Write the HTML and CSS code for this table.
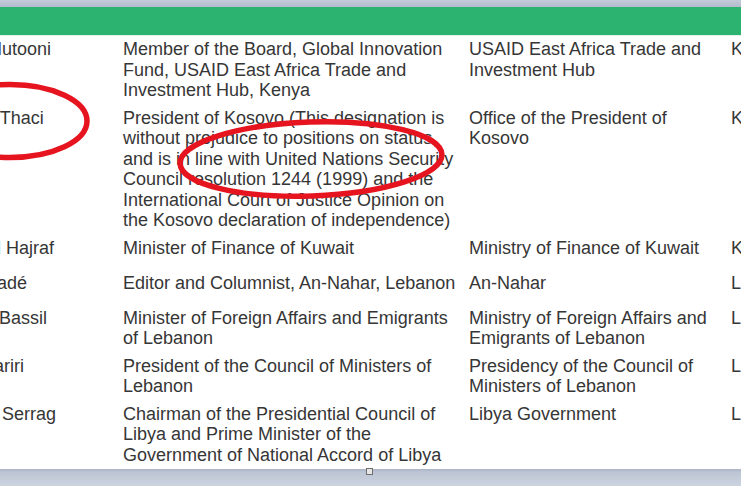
FILE: index.html
```html
<!DOCTYPE html>
<html lang="en">
<head>
<meta charset="utf-8">
<title>Participants</title>
<link rel="stylesheet" href="styles.css">
</head>
<body>
<div class="window">
  <div class="topbar"></div>
  <div class="header"></div>
  <div class="sheet">
    <div class="table">
      <div class="row">
        <div class="cell name">Karen Mutooni</div>
        <div class="cell title">Member of the Board, Global Innovation Fund, USAID East Africa Trade and Investment Hub, Kenya</div>
        <div class="cell org">USAID East Africa Trade and Investment Hub</div>
        <div class="cell country">Kenya</div>
      </div>
      <div class="row">
        <div class="cell name">Hashim Thaci</div>
        <div class="cell title">President of Kosovo (This designation is without prejudice to positions on status, and is in line with United Nations Security Council resolution 1244 (1999) and the International Court of Justice Opinion on the Kosovo declaration of independence)</div>
        <div class="cell org">Office of the President of Kosovo</div>
        <div class="cell country">Kosovo</div>
      </div>
      <div class="row">
        <div class="cell name">Nayef Al Hajraf</div>
        <div class="cell title">Minister of Finance of Kuwait</div>
        <div class="cell org">Ministry of Finance of Kuwait</div>
        <div class="cell country">Kuwait</div>
      </div>
      <div class="row">
        <div class="cell name">Ali Hamadé</div>
        <div class="cell title">Editor and Columnist, An-Nahar, Lebanon</div>
        <div class="cell org">An-Nahar</div>
        <div class="cell country">Lebanon</div>
      </div>
      <div class="row">
        <div class="cell name">Gebran Bassil</div>
        <div class="cell title">Minister of Foreign Affairs and Emigrants of Lebanon</div>
        <div class="cell org">Ministry of Foreign Affairs and Emigrants of Lebanon</div>
        <div class="cell country">Lebanon</div>
      </div>
      <div class="row">
        <div class="cell name">Saad Hariri</div>
        <div class="cell title">President of the Council of Ministers of Lebanon</div>
        <div class="cell org">Presidency of the Council of Ministers of Lebanon</div>
        <div class="cell country">Lebanon</div>
      </div>
      <div class="row">
        <div class="cell name">Fayiz Al Serrag</div>
        <div class="cell title">Chairman of the Presidential Council of Libya and Prime Minister of the Government of National Accord of Libya</div>
        <div class="cell org">Libya Government</div>
        <div class="cell country">Libya</div>
      </div>
    </div>
  </div>
  <div class="bottombar"><span class="handle"></span></div>
  <svg class="marks" width="741" height="486" viewBox="0 0 741 486" aria-hidden="true">
    <ellipse cx="10" cy="121" rx="77" ry="36.5" fill="none" stroke="#e6141e" stroke-width="5.5"/>
    <ellipse cx="311" cy="159" rx="131" ry="37" transform="rotate(-2 311 159)" fill="none" stroke="#e6141e" stroke-width="5.5"/>
  </svg>
</div>
</body>
</html>
```

FILE: styles.css
```css
html, body {
  margin: 0;
  padding: 0;
  background: #ffffff;
}

.window {
  position: relative;
  width: 741px;
  height: 486px;
  overflow: hidden;
  display: flex;
  flex-direction: column;
  font-family: "Liberation Sans", Arial, sans-serif;
  font-size: 18px;
  line-height: 20.5px;
  color: #363636;
}

.topbar {
  height: 7px;
  flex: none;
  background: linear-gradient(#c3cad9, #b2bbcd);
}

.header {
  height: 29px;
  flex: none;
  background: #2cb36f;
  border-bottom: 1px solid #e4f3ea;
  box-sizing: border-box;
}

.sheet {
  flex: 1;
  overflow: hidden;
  background: #ffffff;
}

.table {
  margin-left: -66px;
  width: max-content;
  padding-top: 3px;
}

.row {
  display: grid;
  grid-template-columns: 189px 346px 262px 200px;
  min-height: 35px;
  padding: 3px 0 4px;
  box-sizing: border-box;
}

.row:first-child {
  padding-top: 0;
}

.cell {
  white-space: normal;
}

.name {
  white-space: nowrap;
}

.title {
  padding-right: 6px;
}

.org {
  padding-right: 8px;
}

.bottombar {
  position: relative;
  height: 17px;
  flex: none;
  background: linear-gradient(#a9b3c5 0, #bcc5d4 3px, #cdd4e0 100%);
}

.handle {
  position: absolute;
  left: 366px;
  top: -1px;
  width: 5px;
  height: 5px;
  border: 1px solid #6f6f6f;
  background: #e6e6e6;
}

.marks {
  position: absolute;
  left: 0;
  top: 0;
  pointer-events: none;
}
```
